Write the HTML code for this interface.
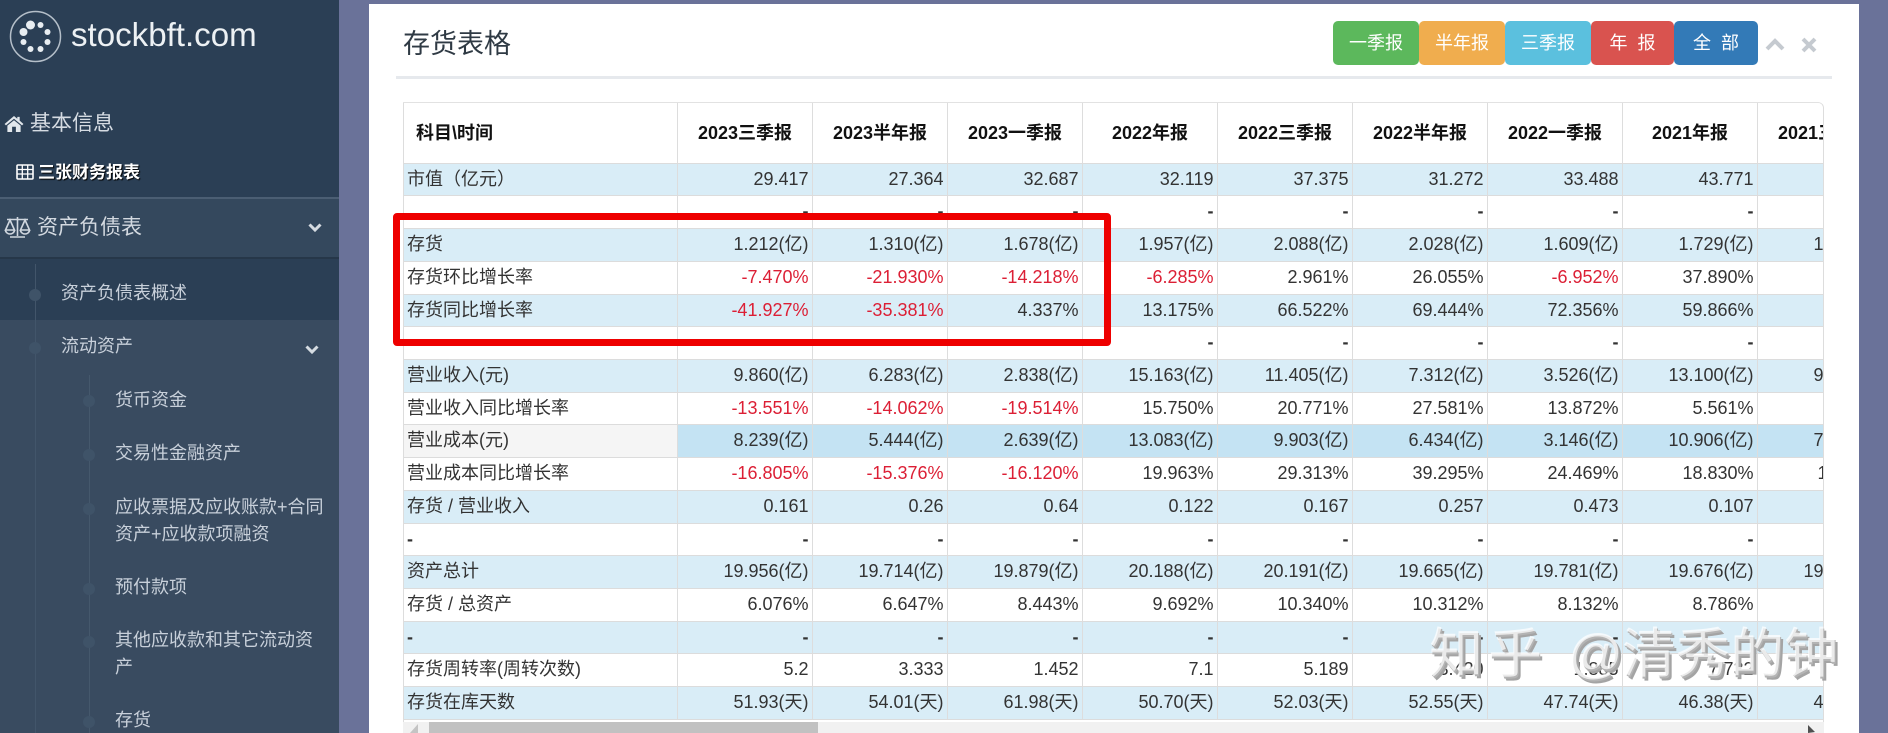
<!DOCTYPE html>
<html lang="zh"><head><meta charset="utf-8"><title>存货表格</title>
<style>
*{box-sizing:border-box;margin:0;padding:0}
html,body{width:1888px;height:733px;overflow:hidden;background:#6a7299;font-family:"Liberation Sans","Noto Sans CJK SC",sans-serif}
.a{position:absolute;white-space:nowrap}
#side{left:0;top:0;width:339px;height:733px;background:#2b3f55;overflow:hidden;color:#c8d0da}
#panel{left:369px;top:4px;width:1490px;height:729px;background:#fff}
.btn{top:21px;height:44px;border-radius:5px;color:#fff;font-size:18px;line-height:44px;text-align:center}
#tb{left:403px;top:102px;width:1421px;height:620px;overflow:hidden;border-left:1px solid #ddd;border-right:1px solid #ddd;border-top:1px solid #e2e2e2;border-top-right-radius:6px;color:#333;font-size:18px}
.r{display:flex;height:32.72px;line-height:31.5px;border-bottom:1px solid #dcdcdc;width:1500px}
.r span{display:block;flex:none;width:135px;border-right:1px solid #ddd;text-align:right;padding-right:3.5px;height:100%}
.r span:first-child{width:274px;text-align:left;padding-left:3px;padding-right:0}
.r.h{height:60.7px;line-height:60px;font-weight:bold;color:#111;background:#fff}
.r.h span{text-align:center;padding:0}
.r.h span:first-child{text-align:left;padding-left:12px}
.b{background:#d9edf7}
.o{background:#c4e3f3}
.o span:first-child{background:#f5f5f5}
.d{font-weight:bold}
.n{color:#dc1f35}
.s{color:#c8d0da}
.dot{position:absolute;width:12px;height:12px;border-radius:50%;background:#3f5368}
.w{top:623px;font-size:54px;line-height:62px;color:rgba(255,255,255,.72);text-shadow:1px 2px 0 #b4b4b4,3px 4px 0 #a4a4a4}
</style></head><body>
<div id="side" class="a">
<svg class="a" style="left:0;top:0" width="70" height="70" viewBox="0 0 70 70"><circle cx="35.5" cy="36.5" r="25" fill="none" stroke="#b5bfc9" stroke-width="1.5"/><g fill="#e8edf1"><circle cx="30.5" cy="25" r="4.5"/><circle cx="23.5" cy="32" r="4"/><circle cx="40.5" cy="25" r="3"/><circle cx="47.5" cy="32" r="3"/><circle cx="47.5" cy="42" r="3"/><circle cx="40.5" cy="49" r="3"/><circle cx="30.5" cy="49" r="3"/><circle cx="23.5" cy="42" r="3"/></g></svg>
<div class="a" style="left:71px;top:15px;font-size:33.1px;line-height:42px;color:#edf1f4">stockbft.com</div>
<svg class="a" style="left:4px;top:115px" width="20" height="17" viewBox="0 0 21 18"><path d="M10.5 1 L0.5 9.5 L2 11 L10.5 4 L19 11 L20.5 9.5 L16.5 6 V2 H14 V4 Z M10.5 5.5 L3.5 11.2 V18 H8.5 V12.5 H12.5 V18 H17.5 V11.2 Z" fill="#e2e7ec"/></svg>
<div class="a" style="left:30px;top:109px;font-size:21px;line-height:30px;color:#d5dbe2">基本信息</div>
<svg class="a" style="left:16px;top:164px" width="18" height="16" viewBox="0 0 18 16"><rect x="1" y="1" width="16" height="14" rx="1" fill="none" stroke="#fff" stroke-width="1.6"/><path d="M1 5.5H17M1 10H17M6.3 1V15M11.7 1V15" stroke="#fff" stroke-width="1.3"/></svg>
<div class="a" style="left:38px;top:161px;font-size:17px;line-height:24px;font-weight:bold;color:#fff;text-shadow:1px 1px 1px #000">三张财务报表</div>
<div class="a" style="left:0;top:197px;width:339px;height:2px;background:#4b5e73"></div>
<div class="a" style="left:0;top:199px;width:339px;height:58px;background:#34485d"></div>
<div class="a" style="left:0;top:257px;width:339px;height:2px;background:#263749"></div>
<svg class="a" style="left:4px;top:215px" width="27" height="24" viewBox="0 0 27 24" fill="none" stroke="#d0d7df" stroke-width="1.6"><path d="M13.5 2V21M6 22H21M3 4.5H24M6 5L1.5 15H10.5ZM21 5L16.5 15H25.5Z"/><path d="M1.5 15A4.5 4 0 0 0 10.5 15M16.5 15A4.5 4 0 0 0 25.5 15"/></svg>
<div class="a" style="left:37px;top:213px;font-size:21px;line-height:30px;color:#d3d9e0">资产负债表</div>
<svg class="a" style="left:308px;top:222px" width="14" height="11" viewBox="0 0 14 11"><path d="M1.5 2.5L7 8L12.5 2.5" fill="none" stroke="#d6dce2" stroke-width="3"/></svg>
<div class="a" style="left:0;top:320px;width:339px;height:413px;background:#394b60"></div>
<div class="a" style="left:35px;top:264px;width:1px;height:469px;background:#42556a"></div>
<div class="a" style="left:89px;top:375px;width:1px;height:358px;background:#45586c"></div>
<i class="dot" style="left:29px;top:289px"></i><i class="dot" style="left:29px;top:342px"></i>
<i class="dot" style="left:83px;top:395px"></i><i class="dot" style="left:83px;top:449px"></i><i class="dot" style="left:83px;top:503px"></i><i class="dot" style="left:83px;top:583px"></i><i class="dot" style="left:83px;top:636px"></i><i class="dot" style="left:83px;top:716px"></i>
<div class="a s" style="left:61px;top:280px;font-size:18px;line-height:26px">资产负债表概述</div>
<div class="a s" style="left:61px;top:333px;font-size:18px;line-height:26px">流动资产</div>
<svg class="a" style="left:305px;top:344px" width="14" height="11" viewBox="0 0 14 11"><path d="M1.5 2.5L7 8L12.5 2.5" fill="none" stroke="#d6dce2" stroke-width="3"/></svg>
<div class="a s" style="left:115px;top:387px;font-size:18px;line-height:26px">货币资金</div>
<div class="a s" style="left:115px;top:440px;font-size:18px;line-height:26px">交易性金融资产</div>
<div class="a s" style="left:115px;top:494px;font-size:18px;line-height:26.5px">应收票据及应收账款+合同<br>资产+应收款项融资</div>
<div class="a s" style="left:115px;top:574px;font-size:18px;line-height:26px">预付款项</div>
<div class="a s" style="left:115px;top:627px;font-size:18px;line-height:26.5px">其他应收款和其它流动资<br>产</div>
<div class="a s" style="left:115px;top:707px;font-size:18px;line-height:26px">存货</div>
</div>
<div id="panel" class="a"></div>
<div class="a" style="left:403px;top:27px;font-size:27px;line-height:34px;color:#2f3a44">存货表格</div>
<div class="a btn" style="left:1333px;width:86px;background:#5cb85c">一季报</div>
<div class="a btn" style="left:1419px;width:86px;background:#f0ad4e">半年报</div>
<div class="a btn" style="left:1505px;width:86px;background:#5bc0de">三季报</div>
<div class="a btn" style="left:1591px;width:83px;background:#d9534f">年&nbsp;&nbsp;报</div>
<div class="a btn" style="left:1674px;width:84px;background:#337ab7">全&nbsp;&nbsp;部</div>
<svg class="a" style="left:1765px;top:36px" width="20" height="16" viewBox="0 0 20 16"><path d="M2 13L10 5L18 13" fill="none" stroke="#c5cad0" stroke-width="4"/></svg>
<svg class="a" style="left:1801px;top:37px" width="16" height="16" viewBox="0 0 16 16"><path d="M2 2L14 14M14 2L2 14" fill="none" stroke="#c5cad0" stroke-width="4"/></svg>
<div class="a" style="left:396px;top:76px;width:1436px;height:3px;background:#e6e9ed"></div>
<div id="tb" class="a">
<div class="r h"><span>科目\时间</span><span>2023三季报</span><span>2023半年报</span><span>2023一季报</span><span>2022年报</span><span>2022三季报</span><span>2022半年报</span><span>2022一季报</span><span>2021年报</span><span>2021三季报</span></div>
<div class="r b"><span>市值（亿元）</span><span>29.417</span><span>27.364</span><span>32.687</span><span>32.119</span><span>37.375</span><span>31.272</span><span>33.488</span><span>43.771</span><span>41.520</span></div>
<div class="r d"><span></span><span>-</span><span>-</span><span>-</span><span>-</span><span>-</span><span>-</span><span>-</span><span>-</span><span>-</span></div>
<div class="r b"><span>存货</span><span>1.212(亿)</span><span>1.310(亿)</span><span>1.678(亿)</span><span>1.957(亿)</span><span>2.088(亿)</span><span>2.028(亿)</span><span>1.609(亿)</span><span>1.729(亿)</span><span>1.254(亿)</span></div>
<div class="r"><span>存货环比增长率</span><span class="n">-7.470%</span><span class="n">-21.930%</span><span class="n">-14.218%</span><span class="n">-6.285%</span><span>2.961%</span><span>26.055%</span><span class="n">-6.952%</span><span>37.890%</span><span></span></div>
<div class="r b"><span>存货同比增长率</span><span class="n">-41.927%</span><span class="n">-35.381%</span><span>4.337%</span><span>13.175%</span><span>66.522%</span><span>69.444%</span><span>72.356%</span><span>59.866%</span><span></span></div>
<div class="r d"><span></span><span>-</span><span>-</span><span>-</span><span>-</span><span>-</span><span>-</span><span>-</span><span>-</span><span>-</span></div>
<div class="r b"><span>营业收入(元)</span><span>9.860(亿)</span><span>6.283(亿)</span><span>2.838(亿)</span><span>15.163(亿)</span><span>11.405(亿)</span><span>7.312(亿)</span><span>3.526(亿)</span><span>13.100(亿)</span><span>9.480(亿)</span></div>
<div class="r"><span>营业收入同比增长率</span><span class="n">-13.551%</span><span class="n">-14.062%</span><span class="n">-19.514%</span><span>15.750%</span><span>20.771%</span><span>27.581%</span><span>13.872%</span><span>5.561%</span><span></span></div>
<div class="r o"><span>营业成本(元)</span><span>8.239(亿)</span><span>5.444(亿)</span><span>2.639(亿)</span><span>13.083(亿)</span><span>9.903(亿)</span><span>6.434(亿)</span><span>3.146(亿)</span><span>10.906(亿)</span><span>7.660(亿)</span></div>
<div class="r"><span>营业成本同比增长率</span><span class="n">-16.805%</span><span class="n">-15.376%</span><span class="n">-16.120%</span><span>19.963%</span><span>29.313%</span><span>39.295%</span><span>24.469%</span><span>18.830%</span><span>12.350%</span></div>
<div class="r b"><span>存货 / 营业收入</span><span>0.161</span><span>0.26</span><span>0.64</span><span>0.122</span><span>0.167</span><span>0.257</span><span>0.473</span><span>0.107</span><span></span></div>
<div class="r d"><span>-</span><span>-</span><span>-</span><span>-</span><span>-</span><span>-</span><span>-</span><span>-</span><span>-</span><span>-</span></div>
<div class="r b"><span>资产总计</span><span>19.956(亿)</span><span>19.714(亿)</span><span>19.879(亿)</span><span>20.188(亿)</span><span>20.191(亿)</span><span>19.665(亿)</span><span>19.781(亿)</span><span>19.676(亿)</span><span>19.120(亿)</span></div>
<div class="r"><span>存货 / 总资产</span><span>6.076%</span><span>6.647%</span><span>8.443%</span><span>9.692%</span><span>10.340%</span><span>10.312%</span><span>8.132%</span><span>8.786%</span><span></span></div>
<div class="r b d"><span>-</span><span>-</span><span>-</span><span>-</span><span>-</span><span>-</span><span>-</span><span>-</span><span>-</span></div>
<div class="r"><span>存货周转率(周转次数)</span><span>5.2</span><span>3.333</span><span>1.452</span><span>7.1</span><span>5.189</span><span>3.420</span><span>1.885</span><span>7.732</span><span></span></div>
<div class="r b"><span>存货在库天数</span><span>51.93(天)</span><span>54.01(天)</span><span>61.98(天)</span><span>50.70(天)</span><span>52.03(天)</span><span>52.55(天)</span><span>47.74(天)</span><span>46.38(天)</span><span>47.10(天)</span></div>
</div>
<div class="a" style="left:403px;top:722px;width:1421px;height:11px;background:#f1f1f1"></div>
<div class="a" style="left:429px;top:722px;width:389px;height:11px;background:#c1c1c1"></div>
<svg class="a" style="left:410px;top:724px" width="10" height="9" viewBox="0 0 10 9"><path d="M8 0V9H0Z" fill="#c4c4c4"/></svg>
<svg class="a" style="left:1808px;top:725px" width="8" height="8" viewBox="0 0 8 8"><path d="M0 0L7 7L0 8Z" fill="#505050"/></svg>
<div class="a" style="left:393px;top:213px;width:718px;height:133px;border:7px solid #ee0000;border-radius:4px"></div>
<div class="a w" style="left:1429px"><span style="letter-spacing:5px">知乎</span></div>
<div class="a w" style="left:1568px">@</div>
<div class="a w" style="left:1622px">清秀的钟</div>
</body></html>
